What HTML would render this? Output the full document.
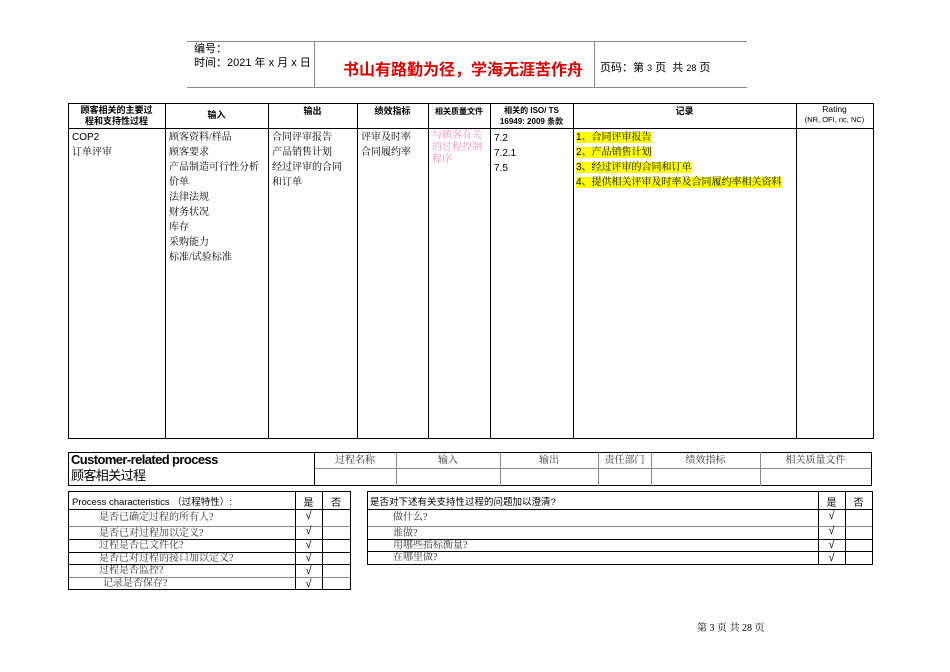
<!DOCTYPE html>
<html><head><meta charset="utf-8"><style>
body{margin:0;width:950px;height:672px;background:#fff;position:relative;overflow:hidden;font-family:"Liberation Sans","Noto Sans CJK SC",sans-serif;color:#000}
.a{position:absolute}
.h{position:absolute;height:1px;background:#000}
.v{position:absolute;width:1px;background:#000}
.g{background:#888}
.s{font-family:"Liberation Serif","Noto Serif CJK SC",serif;font-size:10px;line-height:15px}
.hd{font-size:9px;font-weight:bold;text-align:center;line-height:11px}
.y{background:#ff0}
.t{font-family:"Liberation Serif","Noto Serif CJK SC",serif;font-size:10px;line-height:13px;color:#333}
</style></head><body>
<div class="h g" style="left:187px;top:41px;width:560px"></div>
<div class="h g" style="left:187px;top:87px;width:560px"></div>
<div class="v g" style="left:314px;top:41px;height:46px"></div>
<div class="v g" style="left:594px;top:41px;height:46px"></div>
<div class="a" style="left:194px;top:42px;font-size:11px;line-height:14px">编号：<br>时间：2021 年 x 月 x 日</div>
<div class="a" style="left:343px;top:56px;font-size:16px;font-weight:bold;color:#e00000;font-family:'Noto Sans CJK SC',sans-serif">书山有路勤为径，学海无涯苦作舟</div>
<div class="a" style="left:600px;top:59px;font-size:11px">页码：第 <span style="font-size:9px">3</span> 页 &nbsp;共 <span style="font-size:9px">28</span> 页</div>

<div class="h" style="left:68px;top:103px;width:806px"></div>
<div class="h" style="left:68px;top:128px;width:806px"></div>
<div class="h" style="left:68px;top:438px;width:806px"></div>
<div class="v" style="left:68px;top:103px;height:336px"></div>
<div class="v" style="left:165px;top:103px;height:336px"></div>
<div class="v" style="left:268px;top:103px;height:336px"></div>
<div class="v" style="left:357px;top:103px;height:336px"></div>
<div class="v" style="left:428px;top:103px;height:336px"></div>
<div class="v" style="left:490px;top:103px;height:336px"></div>
<div class="v" style="left:573px;top:103px;height:336px"></div>
<div class="v" style="left:796px;top:103px;height:336px"></div>
<div class="v" style="left:873px;top:103px;height:336px"></div>
<div class="a hd" style="left:68px;top:105px;width:97px">顾客相关的主要过<br>程和支持性过程</div>
<div class="a hd" style="left:165px;top:110px;width:103px">输入</div>
<div class="a hd" style="left:268px;top:106px;width:89px">输出</div>
<div class="a hd" style="left:357px;top:106px;width:71px">绩效指标</div>
<div class="a hd" style="left:428px;top:106px;width:62px;font-size:8px">相关质量文件</div>
<div class="a hd" style="left:490px;top:105px;width:83px;font-size:8px">相关的 ISO/ TS<br>16949: 2009 条款</div>
<div class="a hd" style="left:573px;top:106px;width:223px">记录</div>
<div class="a" style="left:796px;top:104px;width:77px;text-align:center;font-size:8.5px;line-height:10px">Rating<br><span style="font-size:7.5px">(NR, OFI, nc, NC)</span></div>

<div class="a s" style="left:72px;top:130px"><span style="font-family:'Liberation Sans'">COP2</span><br>订单评审</div>
<div class="a s" style="left:169px;top:130px">顾客资料/样品<br>顾客要求<br>产品制造可行性分析<br>价单<br>法律法规<br>财务状况<br>库存<br>采购能力<br>标准/试验标准</div>
<div class="a s" style="left:272px;top:130px">合同评审报告<br>产品销售计划<br>经过评审的合同<br>和订单</div>
<div class="a s" style="left:361px;top:130px">评审及时率<br>合同履约率</div>
<div class="a s" style="left:432px;top:130px;color:#f08fbf;line-height:12px;width:56px">与顾客有关的过程控制程序</div>
<div class="a" style="left:494px;top:131px;font-size:10px;line-height:15px">7.2<br>7.2.1<br>7.5</div>
<div class="a s" style="left:576px;top:130px"><span class="y"><span style="font-family:'Liberation Sans'">1</span>、合同评审报告</span><br><span class="y"><span style="font-family:'Liberation Sans'">2</span>、产品销售计划</span><br><span class="y"><span style="font-family:'Liberation Sans'">3</span>、经过评审的合同和订单</span><br><span class="y"><span style="font-family:'Liberation Sans'">4</span>、提供相关评审及时率及合同履约率相关资料</span></div>

<div class="h" style="left:68px;top:452px;width:804px"></div>
<div class="h g" style="left:314px;top:468px;width:558px"></div>
<div class="h" style="left:68px;top:485px;width:804px"></div>
<div class="v" style="left:68px;top:452px;height:34px"></div>
<div class="v" style="left:314px;top:452px;height:34px"></div>
<div class="v g" style="left:396px;top:452px;height:34px"></div>
<div class="v g" style="left:500px;top:452px;height:34px"></div>
<div class="v g" style="left:598px;top:452px;height:34px"></div>
<div class="v g" style="left:651px;top:452px;height:34px"></div>
<div class="v g" style="left:760px;top:452px;height:34px"></div>
<div class="v" style="left:871px;top:452px;height:34px"></div>
<div class="a" style="left:71px;top:452px;font-size:13px;line-height:16px;letter-spacing:-0.6px;font-weight:bold;-webkit-text-stroke:0">Customer-related process<br><span style="font-weight:normal">顾客相关过程</span></div>
<div class="a t" style="left:314px;top:454px;width:82px;text-align:center">过程名称</div>
<div class="a t" style="left:396px;top:454px;width:104px;text-align:center">输入</div>
<div class="a t" style="left:500px;top:454px;width:98px;text-align:center">输出</div>
<div class="a t" style="left:598px;top:454px;width:53px;text-align:center">责任部门</div>
<div class="a t" style="left:651px;top:454px;width:109px;text-align:center">绩效指标</div>
<div class="a t" style="left:760px;top:454px;width:111px;text-align:center">相关质量文件</div>

<div class="h" style="left:68px;top:491px;width:282px"></div>
<div class="h" style="left:68px;top:509px;width:282px"></div>
<div class="h g" style="left:68px;top:526px;width:282px"></div>
<div class="h" style="left:68px;top:539px;width:282px"></div>
<div class="h" style="left:68px;top:552px;width:282px"></div>
<div class="h" style="left:68px;top:564px;width:282px"></div>
<div class="h g" style="left:68px;top:577px;width:282px"></div>
<div class="h" style="left:68px;top:589px;width:282px"></div>
<div class="v" style="left:68px;top:491px;height:99px"></div>
<div class="v" style="left:295px;top:491px;height:99px"></div>
<div class="v" style="left:322px;top:491px;height:99px"></div>
<div class="v" style="left:350px;top:491px;height:99px"></div>
<div class="a" style="left:72px;top:494px;font-size:9.5px">Process characteristics （过程特性）:</div>
<div class="a" style="left:295px;top:494px;width:27px;text-align:center;font-size:10px">是</div>
<div class="a" style="left:322px;top:494px;width:28px;text-align:center;font-size:10px">否</div>
<div class="a t" style="left:99px;top:511px">是否已确定过程的所有人?</div>
<div class="a t" style="left:99px;top:527px">是否已对过程加以定义?</div>
<div class="a t" style="left:99px;top:539px">过程是否已文件化?</div>
<div class="a t" style="left:99px;top:552px">是否已对过程的接口加以定义?</div>
<div class="a t" style="left:99px;top:564px">过程是否监控?</div>
<div class="a t" style="left:103px;top:577px">记录是否保存?</div>
<div class="a" style="left:295px;top:510px;width:27px;text-align:center;font-size:11px;line-height:13px">√<br><span style="line-height:16px">√</span><br>√<br>√<br>√<br>√</div>

<div class="h" style="left:367px;top:491px;width:506px"></div>
<div class="h" style="left:367px;top:509px;width:506px"></div>
<div class="h g" style="left:367px;top:526px;width:506px"></div>
<div class="h" style="left:367px;top:539px;width:506px"></div>
<div class="h" style="left:367px;top:551px;width:506px"></div>
<div class="h" style="left:367px;top:564px;width:506px"></div>
<div class="v" style="left:367px;top:491px;height:74px"></div>
<div class="v" style="left:818px;top:491px;height:74px"></div>
<div class="v" style="left:845px;top:491px;height:74px"></div>
<div class="v" style="left:872px;top:491px;height:74px"></div>
<div class="a" style="left:370px;top:494px;font-size:9.5px">是否对下述有关支持性过程的问题加以澄清?</div>
<div class="a" style="left:818px;top:494px;width:27px;text-align:center;font-size:10px">是</div>
<div class="a" style="left:845px;top:494px;width:27px;text-align:center;font-size:10px">否</div>
<div class="a t" style="left:393px;top:511px">做什么?</div>
<div class="a t" style="left:393px;top:527px">谁做?</div>
<div class="a t" style="left:393px;top:539px">用哪些指标衡量?</div>
<div class="a t" style="left:393px;top:551px">在哪里做?</div>
<div class="a" style="left:818px;top:510px;width:27px;text-align:center;font-size:11px;line-height:13px">√<br><span style="line-height:16px">√</span><br>√<br>√</div>

<div class="a" style="left:697px;top:619px;font-size:10px;font-family:'Liberation Serif','Noto Serif CJK SC',serif">第 3 页 共 28 页</div>
</body></html>
